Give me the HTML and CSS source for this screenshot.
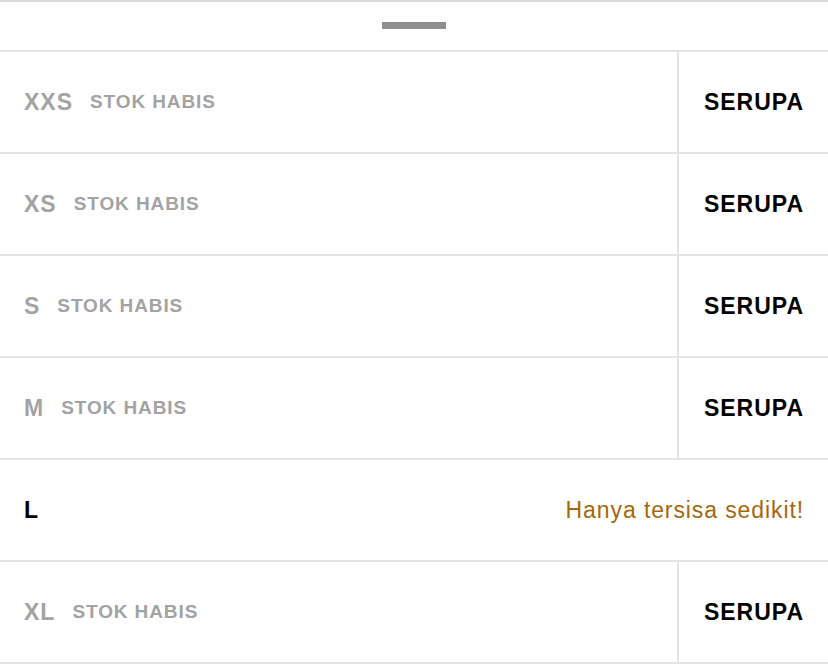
FILE: index.html
```html
<!DOCTYPE html>
<html>
<head>
    <meta charset="UTF-8">
    <meta name="viewport" content="width=device-width, initial-scale=1.0">
    <title>Pilih ukuran</title>
    <link rel="stylesheet" href="styles.css">
</head>
<body>
    <div class="sheet">
        <div class="handle-area">
            <div class="handle"></div>
        </div>

        <ul class="size-list">
            <li class="size-row">
                <div class="size-info">
                    <span class="size-name">XXS</span>
                    <span class="stock-note">STOK HABIS</span>
                </div>
                <button class="similar-btn">SERUPA</button>
            </li>
            <li class="size-row">
                <div class="size-info">
                    <span class="size-name">XS</span>
                    <span class="stock-note">STOK HABIS</span>
                </div>
                <button class="similar-btn">SERUPA</button>
            </li>
            <li class="size-row">
                <div class="size-info">
                    <span class="size-name">S</span>
                    <span class="stock-note">STOK HABIS</span>
                </div>
                <button class="similar-btn">SERUPA</button>
            </li>
            <li class="size-row">
                <div class="size-info">
                    <span class="size-name">M</span>
                    <span class="stock-note">STOK HABIS</span>
                </div>
                <button class="similar-btn">SERUPA</button>
            </li>
            <li class="size-row available">
                <div class="size-info">
                    <span class="size-name">L</span>
                </div>
                <span class="low-stock">Hanya tersisa sedikit!</span>
            </li>
            <li class="size-row">
                <div class="size-info">
                    <span class="size-name">XL</span>
                    <span class="stock-note">STOK HABIS</span>
                </div>
                <button class="similar-btn">SERUPA</button>
            </li>
        </ul>
    </div>
</body>
</html>
```

FILE: styles.css
```css
body {
    margin: 0;
    font-family: "Liberation Sans", Arial, sans-serif;
    background-color: #fff;
}

.sheet {
    border-top: 2px solid #d9d9d9;
}

.handle-area {
    height: 48px;
    display: flex;
    justify-content: center;
    padding-top: 20px;
    box-sizing: border-box;
}

.handle {
    width: 64px;
    height: 7px;
    background-color: #8e8e8e;
}

.size-list {
    list-style: none;
    margin: 0;
    padding: 0;
    border-top: 2px solid #e4e4e4;
}

.size-row {
    display: flex;
    align-items: stretch;
    height: 100px;
    border-bottom: 2px solid #e4e4e4;
}

.size-info {
    flex: 1;
    display: flex;
    align-items: center;
    gap: 17px;
    padding-left: 24px;
    color: #a3a3a3;
    font-weight: bold;
}

.size-name {
    font-size: 23px;
    letter-spacing: 1px;
}

.stock-note {
    font-size: 19px;
    letter-spacing: 0.9px;
}

.available .size-name {
    color: #000;
}

.similar-btn {
    width: 151px;
    border: none;
    border-left: 2px solid #e4e4e4;
    background: none;
    font-family: inherit;
    font-weight: bold;
    font-size: 23px;
    letter-spacing: 1px;
    text-indent: 1px;
    color: #000;
    padding: 0;
}

.low-stock {
    display: flex;
    align-items: center;
    padding-right: 24px;
    font-size: 23px;
    letter-spacing: 0.9px;
    color: #a4680c;
}
```
